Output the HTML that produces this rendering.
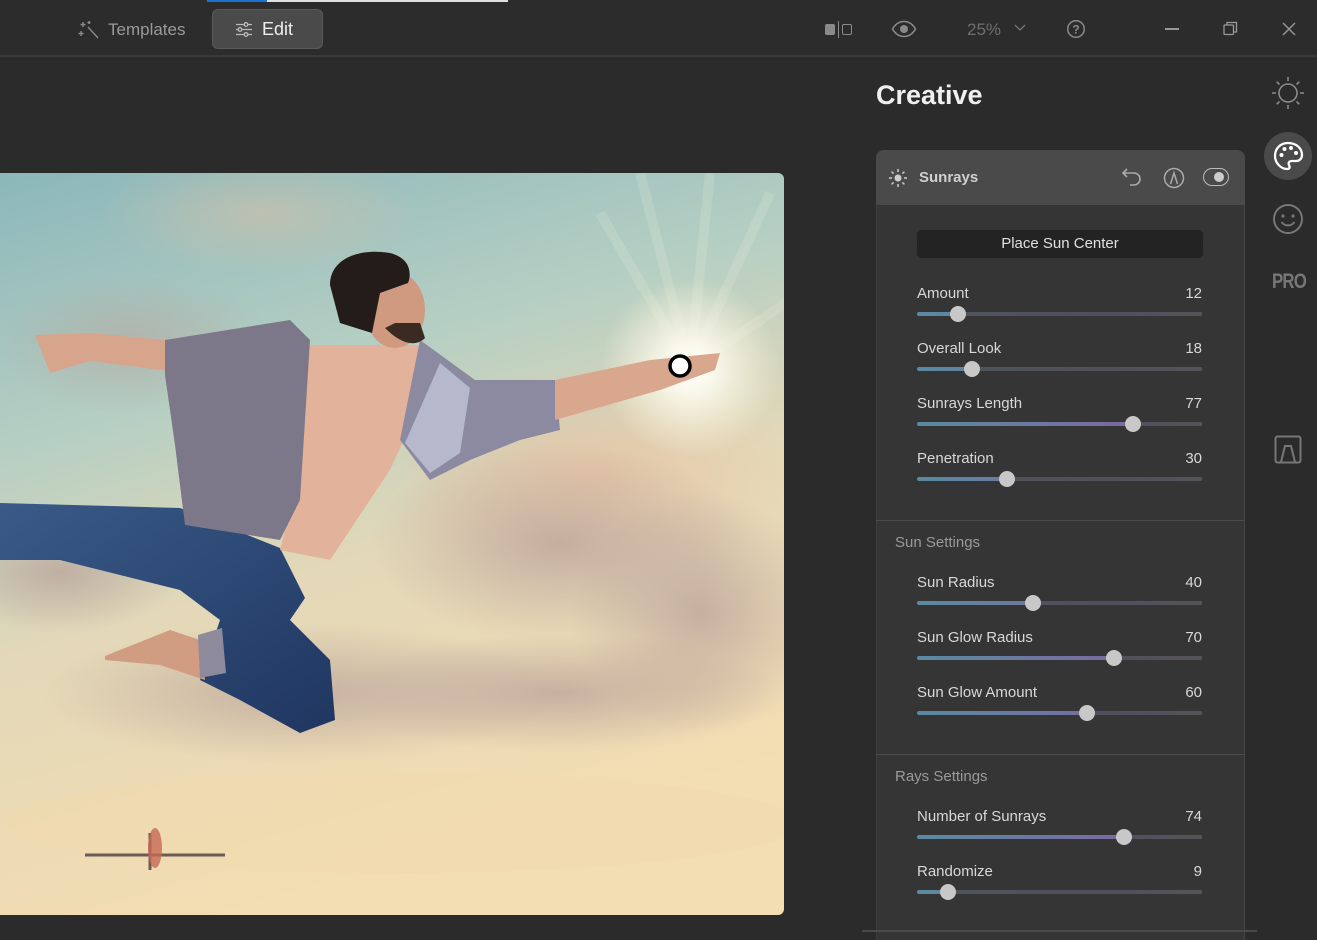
<!DOCTYPE html>
<html><head><meta charset="utf-8"><style>
*{margin:0;padding:0;box-sizing:border-box}
body{width:1317px;height:937px;background:#2b2b2b;font-family:"Liberation Sans",sans-serif;position:relative;overflow:hidden;color:#ddd}
.abs{position:absolute}
.top{left:0;top:0;width:1317px;height:57px;background:#2c2c2c;border-bottom:2px solid #3a3a3a}
.lbl{position:absolute;left:917px;font-size:15px;color:#d8d8d8;line-height:18px}
.val{position:absolute;right:115px;font-size:15px;color:#d8d8d8;line-height:18px;text-align:right}
.trk{position:absolute;left:917px;width:285px;height:4px;border-radius:2px;background:linear-gradient(90deg,#5a8aa2,#7a6aa0 70%,#8a7a98)}
.dim{position:absolute;right:0;top:0;height:4px;background:rgba(70,70,70,.75);border-radius:0 2px 2px 0}
.th{position:absolute;width:16px;height:16px;border-radius:50%;background:#c8c8c8;top:-6px;margin-left:-8px}
.sec{position:absolute;left:895px;font-size:15px;color:#9a9a9a}
</style></head><body>
<div class="abs top"></div>
<div class="abs" style="left:207px;top:0;width:60px;height:2px;background:#1a73d0"></div>
<div class="abs" style="left:267px;top:0;width:241px;height:2px;background:#e0e0e0"></div>
<svg class="abs" style="left:78px;top:20px" width="22" height="20" viewBox="0 0 22 20"><g stroke="#8a8a8a" stroke-width="1.4" fill="none"><path d="M10 7l10 11"/><path d="M5 2v5M2.5 4.5h5M3 11v5M0.5 13.5h5M11 1v3M9.5 2.5h3"/></g></svg>
<div class="abs" style="left:108px;top:20px;font-size:17px;color:#9a9a9a">Templates</div>
<div class="abs" style="left:212px;top:9px;width:111px;height:40px;background:#4a4a4a;border:1px solid #5a5a5a;border-radius:6px"></div>
<svg class="abs" style="left:235px;top:22px" width="18" height="15" viewBox="0 0 18 15"><g stroke="#bbb" stroke-width="1.3" fill="none"><path d="M1 2.5h16M1 7.5h16M1 12.5h16"/><circle cx="11" cy="2.5" r="1.8" fill="#4a4a4a"/><circle cx="5" cy="7.5" r="1.8" fill="#4a4a4a"/><circle cx="11" cy="12.5" r="1.8" fill="#4a4a4a"/></g></svg>
<div class="abs" style="left:262px;top:19px;font-size:18px;color:#eee">Edit</div>
<div class="abs" style="left:825px;top:24px;width:10px;height:11px;background:#8a8a8a;border-radius:2px"></div>
<div class="abs" style="left:838px;top:21px;width:1px;height:17px;background:#8a8a8a"></div>
<div class="abs" style="left:842px;top:24px;width:10px;height:11px;border:1.4px solid #8a8a8a;border-radius:2px"></div>
<svg class="abs" style="left:891px;top:20px" width="26" height="18" viewBox="0 0 26 18"><path d="M1.5 9C5 3 9 1.5 13 1.5S21 3 24.5 9C21 15 17 16.5 13 16.5S5 15 1.5 9z" fill="none" stroke="#8a8a8a" stroke-width="1.6"/><circle cx="13" cy="9" r="4" fill="#8a8a8a"/></svg>
<div class="abs" style="left:967px;top:20px;font-size:17px;color:#6e6e6e">25%</div>
<svg class="abs" style="left:1014px;top:24px" width="12" height="8"><path d="M1 1l5 5 5-5" fill="none" stroke="#777" stroke-width="1.3"/></svg>
<svg class="abs" style="left:1066px;top:19px" width="20" height="20"><circle cx="10" cy="10" r="8.3" fill="none" stroke="#8a8a8a" stroke-width="1.5"/><text x="10" y="14.5" font-size="12" font-weight="bold" text-anchor="middle" fill="#8a8a8a" font-family="Liberation Sans">?</text></svg>
<div class="abs" style="left:1165px;top:28px;width:14px;height:1.5px;background:#999"></div>
<svg class="abs" style="left:1223px;top:21px" width="15" height="15"><g fill="none" stroke="#999" stroke-width="1.3"><rect x="1" y="4" width="9.5" height="9.5" rx="1"/><path d="M4 4V1.5h9.5V11H10.5"/></g></svg>
<svg class="abs" style="left:1282px;top:22px" width="14" height="14"><path d="M1 1l12 12M13 1L1 13" stroke="#999" stroke-width="1.4"/></svg>

<svg class="abs" style="left:0;top:173px" width="784" height="742" viewBox="0 0 784 742">
<defs>
<clipPath id="cp"><path d="M0 0H778a6 6 0 0 1 6 6V736a6 6 0 0 1-6 6H0z"/></clipPath>
<linearGradient id="sky" x1="0" y1="0" x2="0.3" y2="1"><stop offset="0" stop-color="#8bb7ba"/><stop offset=".35" stop-color="#b6cfc3"/><stop offset=".6" stop-color="#e3d8b8"/><stop offset="1" stop-color="#f3ddb2"/></linearGradient>
<radialGradient id="sun"><stop offset="0" stop-color="#fff"/><stop offset=".25" stop-color="#fffdf2" stop-opacity=".9"/><stop offset="1" stop-color="#fff6dc" stop-opacity="0"/></radialGradient>
<radialGradient id="cl"><stop offset="0" stop-color="#b9a29a" stop-opacity=".75"/><stop offset="1" stop-color="#b9a29a" stop-opacity="0"/></radialGradient>
<radialGradient id="cw"><stop offset="0" stop-color="#e9c0a0" stop-opacity=".7"/><stop offset="1" stop-color="#e9c0a0" stop-opacity="0"/></radialGradient>
<linearGradient id="jn" x1="0" y1="0" x2="1" y2="1"><stop offset="0" stop-color="#3a5a88"/><stop offset="1" stop-color="#1f3660"/></linearGradient>
</defs>
<g clip-path="url(#cp)">
<rect width="784" height="742" fill="url(#sky)"/>
<ellipse cx="260" cy="40" rx="160" ry="60" fill="url(#cw)" opacity=".6"/>
<ellipse cx="130" cy="170" rx="140" ry="70" fill="url(#cl)" opacity=".7"/>
<ellipse cx="590" cy="300" rx="200" ry="110" fill="url(#cw)"/>
<ellipse cx="560" cy="370" rx="190" ry="100" fill="url(#cl)"/>
<ellipse cx="700" cy="440" rx="130" ry="120" fill="url(#cl)"/>
<ellipse cx="300" cy="520" rx="260" ry="70" fill="url(#cl)"/>
<ellipse cx="560" cy="520" rx="220" ry="60" fill="url(#cl)"/>
<ellipse cx="60" cy="400" rx="120" ry="60" fill="url(#cl)"/>
<ellipse cx="400" cy="650" rx="400" ry="50" fill="#f2d9ae" opacity=".5"/>
<g stroke="#fffbe8" stroke-width="10" opacity=".14"><path d="M690 195L640 0M690 195L710 0M690 195L770 20M690 195L600 40M690 195L800 120"/></g>
<circle cx="690" cy="195" r="90" fill="url(#sun)"/>
<path d="M35 162L90 160L175 168L170 198L90 188L50 200Z" fill="#d7a48c"/>
<path d="M0 330L180 335L280 375L305 425L290 447L330 487L335 547L300 560L240 527L200 507L220 447L180 417L60 387L0 387Z" fill="url(#jn)"/>
<path d="M105 483L170 457L200 467L205 507L160 492L105 487Z" fill="#d09c82"/>
<path d="M198 462L222 455L226 500L200 505Z" fill="#8d8a9c"/>
<path d="M300 172L420 172L440 187L390 297L330 387L280 377L300 297Z" fill="#e3b29a"/>
<path d="M165 167L290 147L310 167L300 327L280 367L185 352L175 272L165 202Z" fill="#7d7889"/>
<path d="M420 167L475 207L555 207L560 257L520 267L470 287L430 307L400 267Z" fill="#8c8aa0"/>
<path d="M440 190L470 215L460 280L430 300L405 270Z" fill="#b6b9cc"/>
<path d="M555 207L650 187L720 180L715 197L660 217L555 247Z" fill="#d9a78d"/>
<ellipse cx="395" cy="137" rx="30" ry="38" fill="#cf9a80"/>
<path d="M330 112C330 85 360 75 390 80C410 85 412 100 408 110L380 120L372 160L340 150Z" fill="#231c18"/>
<path d="M385 155C400 170 415 175 425 165L420 150L395 150Z" fill="#3a2a22"/>
<path d="M85 682L225 682M150 660L150 697" stroke="#6a5a58" stroke-width="3"/>
<ellipse cx="155" cy="675" rx="7" ry="20" fill="#c76a55" opacity=".8"/>
<circle cx="680" cy="193" r="10" fill="#fff" stroke="#000" stroke-width="3.5"/>
</g>
</svg>

<div class="abs" style="left:876px;top:80px;font-size:27px;font-weight:bold;color:#f0f0f0">Creative</div>

<div class="abs" style="left:876px;top:150px;width:369px;height:790px;background:#353535;border-radius:8px 8px 0 0;border-right:1px solid #454545;border-left:1px solid #3e3e3e"></div>
<div class="abs" style="left:876px;top:150px;width:369px;height:55px;background:#4a4a4a;border-radius:8px 8px 0 0"></div>
<svg class="abs" style="left:888px;top:168px" width="20" height="20" viewBox="0 0 20 20"><circle cx="10" cy="10" r="3.5" fill="#ccc"/><g stroke="#ccc" stroke-width="1.5"><path d="M10 1v3M10 16v3M1 10h3M16 10h3M3.6 3.6l2 2M14.4 14.4l2 2M3.6 16.4l2-2M14.4 5.6l2-2"/></g></svg>
<div class="abs" style="left:919px;top:169px;font-size:15px;font-weight:bold;color:#d0d0d0">Sunrays</div>
<svg class="abs" style="left:1121px;top:167px" width="22" height="20" viewBox="0 0 22 20"><path d="M6 2L2 6l4 4M2 6h11a6 6 0 0 1 0 12H9" fill="none" stroke="#aaa" stroke-width="1.6"/></svg>
<svg class="abs" style="left:1163px;top:167px" width="22" height="22" viewBox="0 0 22 22"><circle cx="11" cy="11" r="9.5" fill="none" stroke="#aaa" stroke-width="1.5"/><path d="M7.5 17L11 6l3.5 11" fill="none" stroke="#aaa" stroke-width="1.5"/></svg>
<div class="abs" style="left:1203px;top:168px;width:26px;height:18px;border:1.6px solid #bbb;border-radius:9px"></div>
<div class="abs" style="left:1214px;top:172px;width:10px;height:10px;border-radius:50%;background:#ccc"></div>

<div class="abs" style="left:917px;top:230px;width:286px;height:28px;background:#232323;border-radius:4px;text-align:center;line-height:28px;font-size:15px;color:#e0e0e0">Place Sun Center</div>

<div class="abs" style="left:876px;top:520px;width:369px;height:1px;background:#4c4c4c"></div>
<div class="abs" style="left:876px;top:754px;width:369px;height:1px;background:#4c4c4c"></div>
<div class="sec" style="top:534px">Sun Settings</div>
<div class="sec" style="top:768px">Rays Settings</div>
<div class="abs" style="left:862px;top:930px;width:395px;height:2px;background:#4a4a4a"></div>

<div class="lbl" style="top:285px">Amount</div><div class="val" style="top:285px">12</div>
<div class="trk" style="top:312px"><div class="dim" style="width:244px"></div><div class="th" style="left:41px"></div></div>
<div class="lbl" style="top:340px">Overall Look</div><div class="val" style="top:340px">18</div>
<div class="trk" style="top:367px"><div class="dim" style="width:230px"></div><div class="th" style="left:55px"></div></div>
<div class="lbl" style="top:395px">Sunrays Length</div><div class="val" style="top:395px">77</div>
<div class="trk" style="top:422px"><div class="dim" style="width:69px"></div><div class="th" style="left:216px"></div></div>
<div class="lbl" style="top:450px">Penetration</div><div class="val" style="top:450px">30</div>
<div class="trk" style="top:477px"><div class="dim" style="width:195px"></div><div class="th" style="left:90px"></div></div>
<div class="lbl" style="top:574px">Sun Radius</div><div class="val" style="top:574px">40</div>
<div class="trk" style="top:601px"><div class="dim" style="width:169px"></div><div class="th" style="left:116px"></div></div>
<div class="lbl" style="top:629px">Sun Glow Radius</div><div class="val" style="top:629px">70</div>
<div class="trk" style="top:656px"><div class="dim" style="width:88px"></div><div class="th" style="left:197px"></div></div>
<div class="lbl" style="top:684px">Sun Glow Amount</div><div class="val" style="top:684px">60</div>
<div class="trk" style="top:711px"><div class="dim" style="width:115px"></div><div class="th" style="left:170px"></div></div>
<div class="lbl" style="top:808px">Number of Sunrays</div><div class="val" style="top:808px">74</div>
<div class="trk" style="top:835px"><div class="dim" style="width:78px"></div><div class="th" style="left:207px"></div></div>
<div class="lbl" style="top:863px">Randomize</div><div class="val" style="top:863px">9</div>
<div class="trk" style="top:890px"><div class="dim" style="width:254px"></div><div class="th" style="left:31px"></div></div>

<svg class="abs" style="left:1270px;top:75px" width="36" height="36" viewBox="0 0 36 36"><circle cx="18" cy="18" r="9" fill="none" stroke="#8a8a8a" stroke-width="1.6"/><g stroke="#8a8a8a" stroke-width="1.6"><path d="M18 2v4M18 30v4M2 18h4M30 18h4M6.7 6.7l2.8 2.8M26.5 26.5l2.8 2.8M6.7 29.3l2.8-2.8M26.5 9.5l2.8-2.8"/></g></svg>
<div class="abs" style="left:1264px;top:132px;width:48px;height:48px;border-radius:50%;background:#4a4a4a"></div>
<svg class="abs" style="left:1272px;top:140px" width="32" height="32" viewBox="0 0 32 32"><path d="M16 3C8 3 3 9 3 16c0 7 6 13 12 13 3 0 3-2 2-4-1-2 0-4 3-4h4c4 0 6-3 6-6C30 8 24 3 16 3z" fill="none" stroke="#fff" stroke-width="2.3"/><circle cx="9.5" cy="15" r="2" fill="#fff"/><circle cx="12.5" cy="9" r="2" fill="#fff"/><circle cx="19" cy="8" r="2" fill="#fff"/><circle cx="24" cy="13" r="2" fill="#fff"/></svg>
<svg class="abs" style="left:1272px;top:203px" width="32" height="32" viewBox="0 0 32 32"><circle cx="16" cy="16" r="14" fill="none" stroke="#777" stroke-width="2"/><circle cx="11" cy="13" r="1.6" fill="#777"/><circle cx="21" cy="13" r="1.6" fill="#777"/><path d="M9.5 19c3 4.5 10 4.5 13 0" fill="none" stroke="#777" stroke-width="2"/></svg>
<div class="abs" style="left:1272px;top:270px;font-size:21px;font-weight:bold;color:#777;letter-spacing:-1px;transform:scaleX(.8);transform-origin:left">PRO</div>
<svg class="abs" style="left:1274px;top:435px" width="28" height="30" viewBox="0 0 28 30"><rect x="1.5" y="1.5" width="25" height="26" rx="2" fill="none" stroke="#777" stroke-width="2"/><path d="M7 27l4-16h6l4 16" fill="none" stroke="#777" stroke-width="2"/></svg>
</body></html>
